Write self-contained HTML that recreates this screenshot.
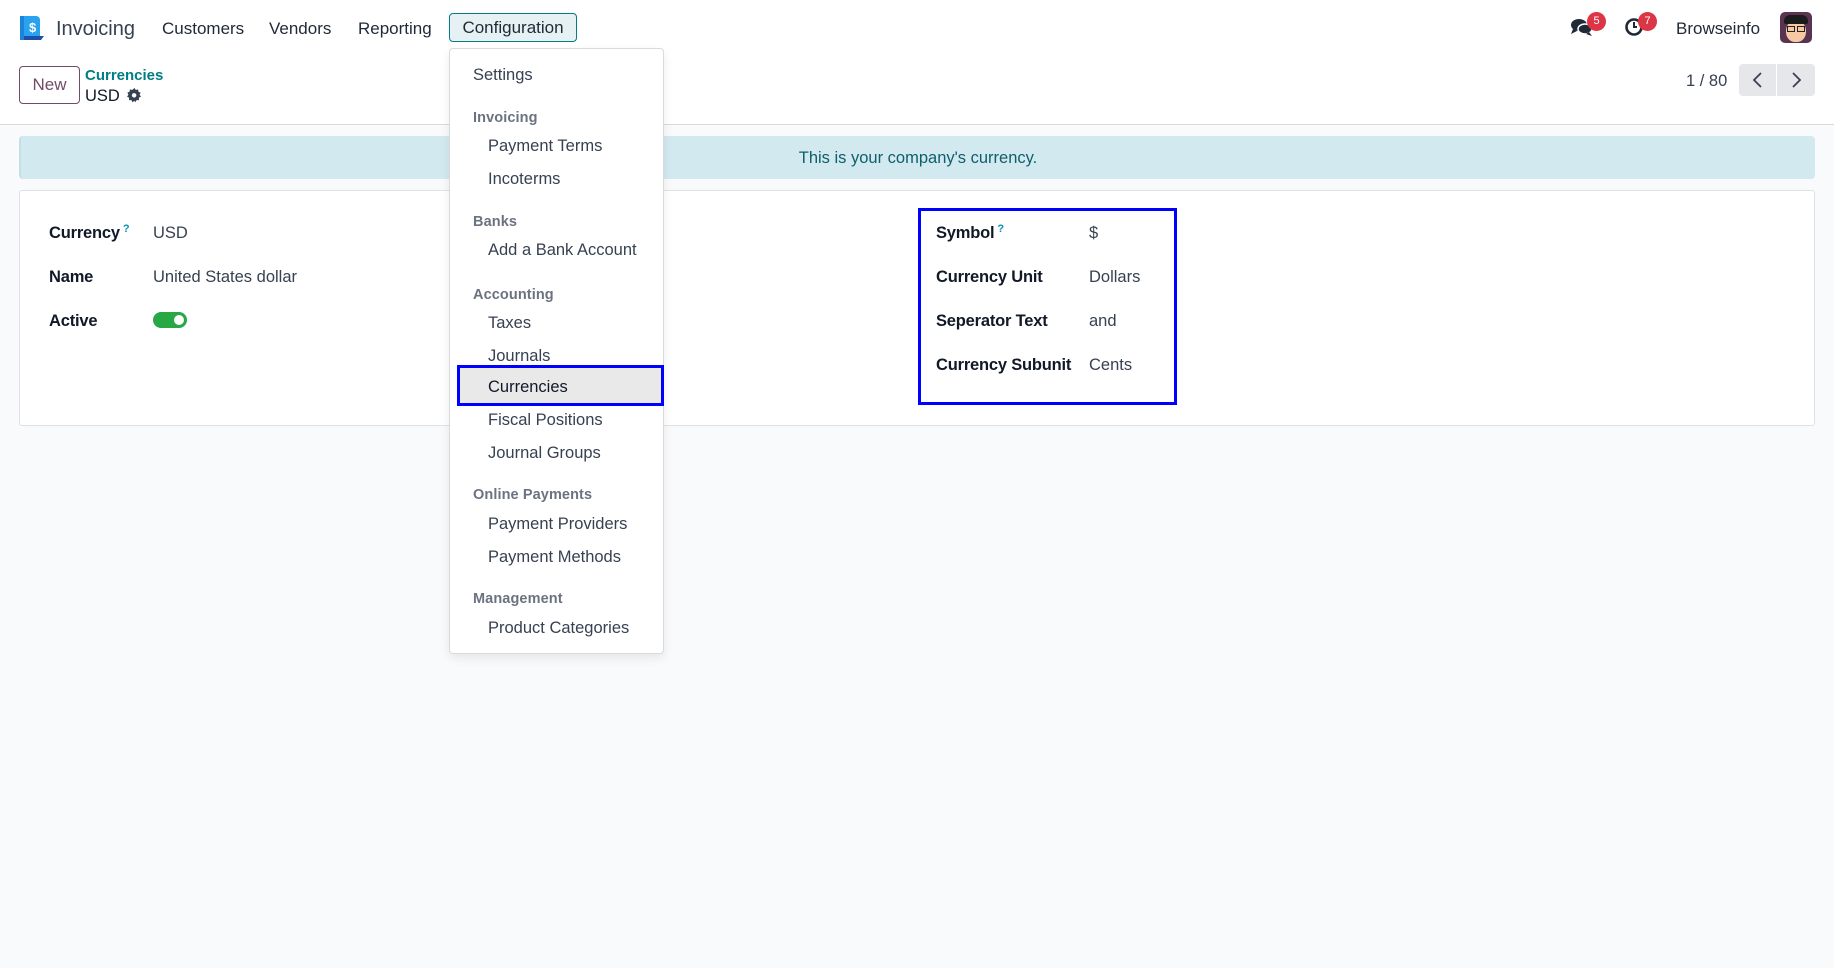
<!DOCTYPE html>
<html><head><meta charset="utf-8"><style>
*{margin:0;padding:0;box-sizing:border-box}
body{width:1834px;height:968px;background:#f9fafb;font-family:"Liberation Sans","DejaVu Sans",sans-serif;color:#374151;position:relative;overflow:hidden}
.a{position:absolute;white-space:nowrap;line-height:20px}
.nav{font-size:17px;color:#1f2937}
.dd .i{position:absolute;left:488px;font-size:16.5px;color:#374151;line-height:20px}
.dd .h{position:absolute;left:473px;font-size:14.5px;color:#6b7280;font-weight:bold;line-height:20px;letter-spacing:0.1px}
.lb{font-size:16.5px;font-weight:bold;color:#111827;letter-spacing:-0.2px}
.vl{font-size:16.5px;color:#374151}
.q{font-size:11px;color:#0891b2;vertical-align:top;position:relative;top:-4px;margin-left:3px}
</style></head><body>
<div style="position:absolute;left:0;top:0;width:1834px;height:125px;background:#fff;border-bottom:1px solid #d8dadd"></div>
<svg class="a" style="left:18px;top:14px" width="28" height="28" viewBox="0 0 28 28">
<path d="M2 2h16a4 4 0 0 1 4 4v16H2z" fill="#2aa2ef"/>
<path d="M4 22h22l-3 4H3z" fill="#1f4fa8"/>
<rect x="2" y="2" width="4" height="24" fill="#1a86d9"/>
<text x="11" y="18" font-size="13" font-weight="bold" fill="#fff" font-family="Liberation Sans">$</text>
</svg>
<div class="a" style="left:56px;top:18px;font-size:20px;color:#374151;line-height:22px">Invoicing</div>
<div class="a nav" style="left:162px;top:19px">Customers</div>
<div class="a nav" style="left:269px;top:19px">Vendors</div>
<div class="a nav" style="left:358px;top:19px">Reporting</div>
<div class="a nav" style="left:449px;top:13px;width:128px;height:29px;background:#e6f1f3;border:1px solid #017e84;border-radius:4px;text-align:center;line-height:28px">Configuration</div>
<svg class="a" style="left:1570px;top:17px" width="24" height="20" viewBox="0 0 24 20">
<ellipse cx="9" cy="8" rx="8" ry="6" fill="#1f2937"/><path d="M3 12l-2 5 6-3z" fill="#1f2937"/>
<ellipse cx="15" cy="12" rx="7" ry="5" fill="#1f2937" stroke="#fff" stroke-width="1.5"/><path d="M19 15l3 4-6-2z" fill="#1f2937"/>
</svg>
<div class="a" style="left:1587px;top:12px;width:19px;height:19px;border-radius:50%;background:#dc3545;color:#fff;font-size:11px;line-height:19px;text-align:center">5</div>
<svg class="a" style="left:1624px;top:17px" width="20" height="20" viewBox="0 0 20 20"><circle cx="10" cy="10" r="7.5" fill="none" stroke="#1f2937" stroke-width="2.6"/><path d="M10 5v5h3" stroke="#1f2937" stroke-width="2" fill="none"/></svg>
<div class="a" style="left:1638px;top:12px;width:19px;height:19px;border-radius:50%;background:#dc3545;color:#fff;font-size:11px;line-height:19px;text-align:center">7</div>
<div class="a" style="left:1676px;top:19px;font-size:17px;color:#1f2937">Browseinfo</div>
<div class="a" style="left:1780px;top:12px;width:32px;height:31px;border-radius:5px;background:#5a3350;overflow:hidden">
<div style="position:absolute;left:6px;top:8px;width:20px;height:22px;border-radius:50% 50% 45% 45%;background:#f6c9a4"></div>
<div style="position:absolute;left:4px;top:3px;width:24px;height:9px;border-radius:6px 6px 2px 2px;background:#1b1b1b"></div>
<div style="position:absolute;left:7px;top:14px;width:8px;height:6px;border:1.5px solid #222"></div>
<div style="position:absolute;left:17px;top:14px;width:8px;height:6px;border:1.5px solid #222"></div>
</div>
<div class="a" style="left:19px;top:66px;width:61px;height:38px;border:1px solid #714b67;border-radius:4px;color:#714b67;font-size:17px;text-align:center;line-height:36px">New</div>
<div class="a" style="left:85px;top:66px;font-size:15px;font-weight:bold;color:#017e84">Currencies</div>
<div class="a" style="left:85px;top:86px;font-size:16.5px;color:#111827">USD</div>
<svg class="a" style="left:127px;top:88px" width="15" height="15" viewBox="0 0 16 16"><path d="M8 0l1.5 2.2 2.6-.7.3 2.7 2.5 1-1.2 2.4 1.6 2.1-2.4 1.3.2 2.7-2.7-.2-1.1 2.5L8 14.4 5.6 16l-1.1-2.5-2.7.2.2-2.7L-.4 9.7 1.2 7.6 0 5.2l2.5-1 .3-2.7 2.6.7z" fill="#374151" transform="scale(0.95) translate(0.4 0)"/><circle cx="7.6" cy="7.8" r="2.4" fill="#fff"/></svg>
<div class="a" style="left:1686px;top:71px;font-size:16.5px;color:#374151">1 / 80</div>
<div class="a" style="left:1739px;top:64px;width:37px;height:32px;background:#e5e7eb;border-radius:4px 0 0 4px"></div>
<div class="a" style="left:1777px;top:64px;width:38px;height:32px;background:#e5e7eb;border-radius:0 4px 4px 0"></div>
<svg class="a" style="left:1750px;top:71px" width="16" height="18"><path d="M11 2L4 9l7 7" stroke="#374151" stroke-width="1.8" fill="none"/></svg>
<svg class="a" style="left:1788px;top:71px" width="16" height="18"><path d="M5 2l7 7-7 7" stroke="#374151" stroke-width="1.8" fill="none"/></svg>
<div class="a" style="left:19px;top:136px;width:1796px;height:43px;background:#d2eaef;border-left:2px solid #c0e0e6;border-radius:4px;text-align:center;line-height:44px;color:#0f5e6b;font-size:16.5px">This is your company's currency.</div>
<div class="a" style="left:19px;top:190px;width:1796px;height:236px;background:#fff;border:1px solid #dee2e6;border-radius:3px"></div>
<div class="a lb" style="left:49px;top:223px">Currency<span class="q">?</span></div>
<div class="a vl" style="left:153px;top:223px">USD</div>
<div class="a lb" style="left:49px;top:267px">Name</div>
<div class="a vl" style="left:153px;top:267px">United States dollar</div>
<div class="a lb" style="left:49px;top:311px">Active</div>
<div class="a" style="left:153px;top:312px;width:34px;height:16px;border-radius:8px;background:#28a745"><div style="position:absolute;right:3px;top:3px;width:10px;height:10px;border-radius:50%;background:#fff"></div></div>
<div class="a" style="left:918px;top:208px;width:259px;height:197px;border:3px solid #0000ff"></div>
<div class="a lb" style="left:936px;top:223px">Symbol<span class="q">?</span></div>
<div class="a vl" style="left:1089px;top:223px">$</div>
<div class="a lb" style="left:936px;top:267px">Currency Unit</div>
<div class="a vl" style="left:1089px;top:267px">Dollars</div>
<div class="a lb" style="left:936px;top:311px">Seperator Text</div>
<div class="a vl" style="left:1089px;top:311px">and</div>
<div class="a lb" style="left:936px;top:355px">Currency Subunit</div>
<div class="a vl" style="left:1089px;top:355px">Cents</div>
<div class="dd">
<div class="a" style="left:449px;top:48px;width:215px;height:606px;background:#fff;border:1px solid #d8dadd;border-radius:4px;box-shadow:0 4px 10px rgba(0,0,0,.08)"></div>
<div class="i" style="left:473px;top:65px">Settings</div>
<div class="h" style="top:108px">Invoicing</div>
<div class="i" style="top:136px">Payment Terms</div>
<div class="i" style="top:169px">Incoterms</div>
<div class="h" style="top:212px">Banks</div>
<div class="i" style="top:240px">Add a Bank Account</div>
<div class="h" style="top:285px">Accounting</div>
<div class="i" style="top:313px">Taxes</div>
<div class="i" style="top:346px">Journals</div>
<div class="a" style="left:457px;top:365px;width:207px;height:41px;background:#e9e9ea;border:3px solid #0000ff"></div>
<div class="i" style="top:377px;color:#111827">Currencies</div>
<div class="i" style="top:410px">Fiscal Positions</div>
<div class="i" style="top:443px">Journal Groups</div>
<div class="h" style="top:485px">Online Payments</div>
<div class="i" style="top:514px">Payment Providers</div>
<div class="i" style="top:547px">Payment Methods</div>
<div class="h" style="top:589px">Management</div>
<div class="i" style="top:618px">Product Categories</div>
</div>
</body></html>
